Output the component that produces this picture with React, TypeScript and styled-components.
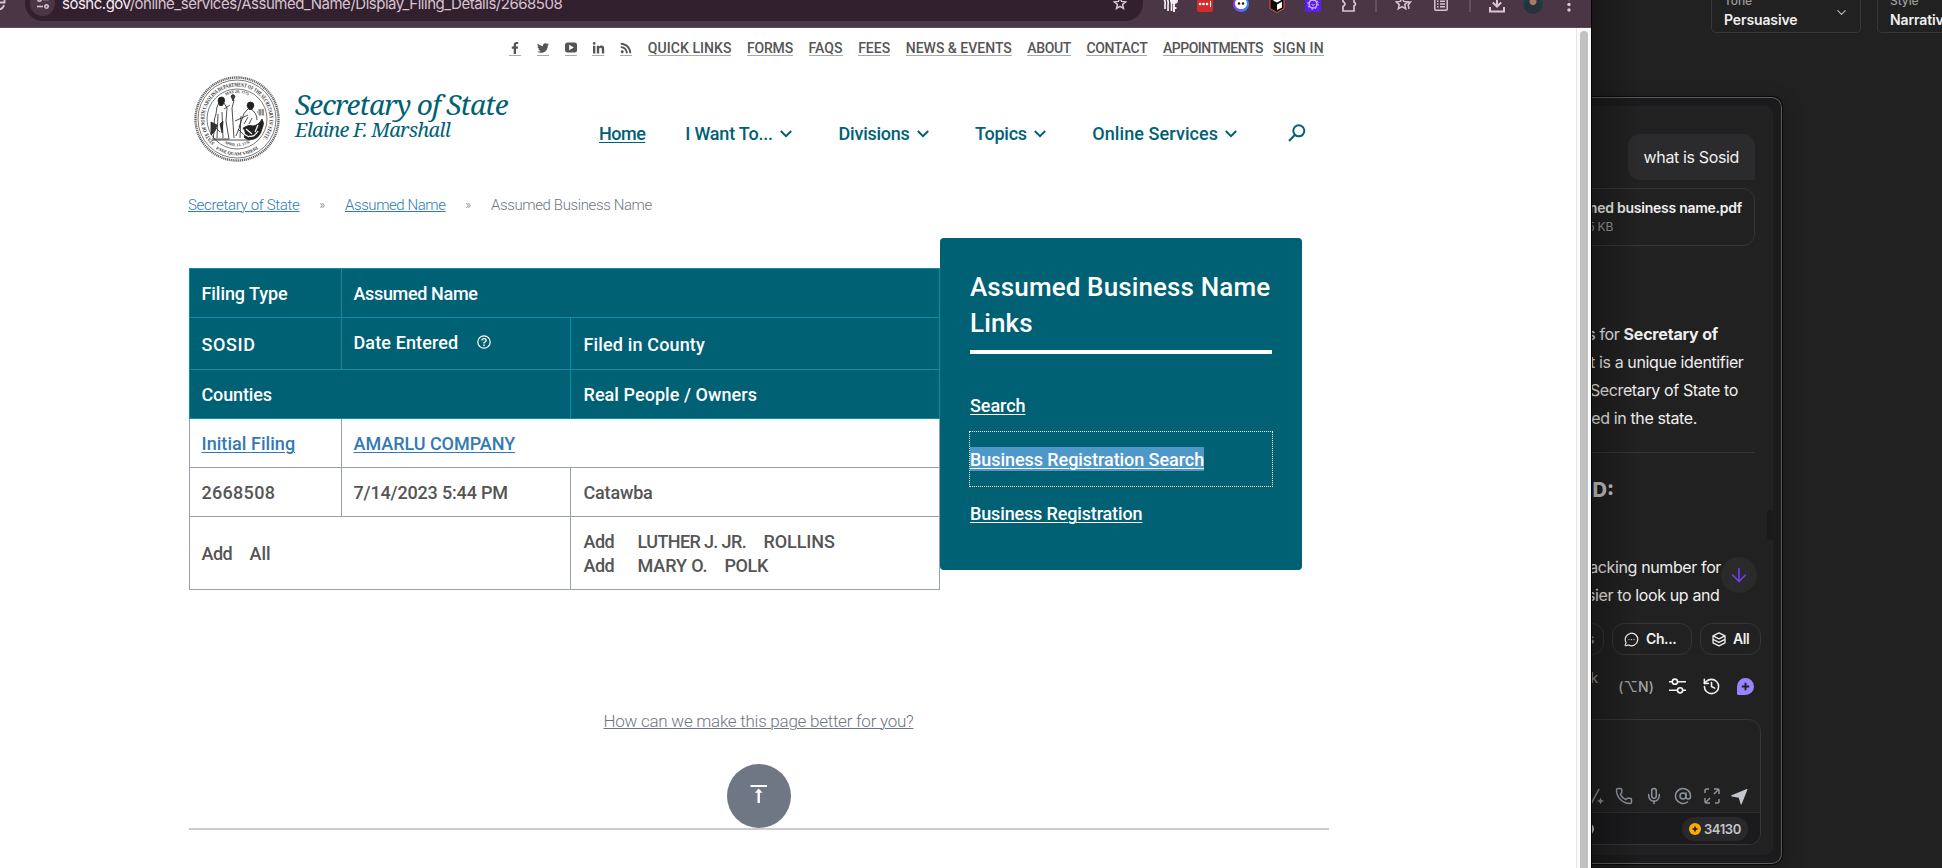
import React from 'react';
import styled, { createGlobalStyle, css } from 'styled-components';
import { Star, ChevronDown, History, Phone, Mic, AtSign, ArrowDown, MessageCircleMore } from 'lucide-react';
import { FaFacebookF, FaTwitter, FaLinkedinIn, FaRss } from 'react-icons/fa';

const TEAL = '#006074';
const RULE_TEAL = '#0a8fa5';
const SITE = 'Roboto, "Liberation Sans", sans-serif';
const APP = 'Inter, "Liberation Sans", sans-serif';

const GlobalStyle = createGlobalStyle`
  * { box-sizing: border-box; }
  body { margin: 0; background: #212121; }
  svg { display: block; flex: none; }
`;

const Desktop = styled.div`
  display: flex;
  width: 1942px;
  height: 868px;
  overflow: hidden;
  white-space: nowrap;
`;

/* ---------- Browser window ---------- */

const BrowserWindow = styled.div`
  display: flex;
  flex-direction: column;
  width: 1591px;
  flex: none;
  background: #fff;
`;

const Toolbar = styled.div`
  display: flex;
  height: 28px;
  flex: none;
  background: #4b3646;
  border-bottom: 1px solid #5d4a58;
  overflow: hidden;
  color: #dcc3d6;
`;

const ReloadSlot = styled.div`
  width: 25px;
  margin-top: -6px;
  flex: none;
`;

const AddressBar = styled.div`
  display: flex;
  align-items: center;
  width: 1118px;
  height: 36px;
  flex: none;
  margin-top: -15px;
  padding: 0 16px 0 5px;
  border-radius: 18px;
  background: #33202f;
`;

const SiteInfo = styled.div`
  display: grid;
  place-items: center;
  width: 25px;
  height: 26px;
  border-radius: 50%;
  background: #4b3646;
`;

const Address = styled.span`
  flex: 1;
  margin: 2px 0 0 7px;
  font: 400 15px/20px ${APP};
  letter-spacing: -0.49px;
  color: #d6c4d1;
  b { font-weight: 400; color: #f6edf4; }
`;

const Extensions = styled.div`
  display: flex;
  align-items: center;
  height: 36px;
  margin: -14px 0 0 8px;
`;

const Slot = styled.div<{ $w?: number }>`
  display: grid;
  place-items: center;
  width: ${p => p.$w ?? 36}px;
`;

const Divider = styled.i`
  width: 2px;
  height: 16px;
  background: #66505f;
`;

const Tile = styled.i<{ $bg: string; $round?: boolean }>`
  display: grid;
  place-items: center;
  width: 16px;
  height: 16px;
  border-radius: ${p => (p.$round ? '50%' : '2px')};
  background: ${p => p.$bg};
`;

const Avatar = styled.i`
  width: 20px;
  height: 20px;
  border-radius: 50%;
  background: radial-gradient(circle at 50% 38%, #a87b62 0 3px, transparent 4px),
    radial-gradient(ellipse at 50% 100%, #26333c 0 8px, #17445a 12px);
`;

const Viewport = styled.div`
  display: flex;
  flex: 1;
`;

const Page = styled.main`
  width: 1576px;
  padding-left: 189px;
  font-family: ${SITE};
  color: #555;
`;

const ScrollTrack = styled.div`
  width: 15px;
  padding: 3px 3px 0 3px;
  border-left: 1px solid #e6e6e6;
  background: #fafafa;
`;

const ScrollThumb = styled.div`
  height: 900px;
  width: 8px;
  border-radius: 4px;
  background: #c1c1c1;
`;

/* ---------- Site header ---------- */

const UtilityNav = styled.nav`
  display: flex;
  width: 1135px;
  height: 28px;
  padding-top: 12px;
  justify-content: flex-end;
  gap: 15.6px;
`;

const UtilityLink = styled.a<{ $w: number; $ls?: number; $tight?: boolean }>`
  width: ${p => p.$w}px;
  height: 16px;
  border-bottom: 1px solid #aaa;
  font: 500 14px/17px ${SITE};
  letter-spacing: ${p => p.$ls ?? 0}px;
  color: #555;
  ${p => p.$tight && css`margin-left: -5.6px;`}
  svg { margin: 2px auto 0; }
`;

const Header = styled.header`
  display: flex;
  height: 139px;
  padding-left: 5px;
`;

const SealSvg = styled.svg`
  width: 86px;
  height: 86px;
  margin-top: 20px;
`;

const Brand = styled.div`
  width: 319px;
  flex: none;
  padding: 33px 0 0 15px;
  font-family: "Noto Serif", "Liberation Serif", serif;
  font-style: italic;
  color: ${TEAL};
`;

const BrandTitle = styled.div`
  font-size: 28px;
  line-height: 30px;
  letter-spacing: -0.9px;
`;

const BrandName = styled.div`
  font-size: 20px;
  line-height: 22px;
  letter-spacing: -0.74px;
`;

const MainNav = styled.nav`
  display: flex;
  gap: 40.3px;
  padding-top: 66px;
`;

const NavItem = styled.a<{ $w: number; $ls: number; $current?: boolean }>`
  display: flex;
  align-items: center;
  height: 24px;
  font: 500 18px/24px ${SITE};
  color: ${TEAL};
  span {
    width: ${p => p.$w}px;
    letter-spacing: ${p => p.$ls}px;
    ${p => p.$current && css`text-decoration: underline; text-underline-offset: 2px; text-decoration-thickness: 1px;`}
  }
  svg { margin: 0 6px 0 7px; }
`;

const SearchButton = styled.span`
  margin: 2px 0 0 5px;
`;

const Breadcrumb = styled.nav`
  display: flex;
  height: 43px;
  margin-left: -1px;
  font: 300 15px/20px ${SITE};
  color: #6f7683;
  i { width: 45.5px; text-align: center; font-style: normal; font-size: 13px; }
`;

const Crumb = styled.span<{ $w: number; $ls: number; $link?: boolean }>`
  width: ${p => p.$w}px;
  letter-spacing: ${p => p.$ls}px;
  ${p => p.$link && css`
    color: #2f7bb3;
    text-decoration: underline;
    text-decoration-thickness: 1px;
    text-underline-offset: 1px;
  `}
`;

/* ---------- Filing table ---------- */

const Main = styled.section`
  display: flex;
  align-items: flex-start;
  height: 352px;
`;

const Filing = styled.div`
  width: 751px;
  margin-top: 30px;
`;

const Band = styled.div<{ $head?: boolean }>`
  --rule: ${p => (p.$head ? RULE_TEAL : '#97a1aa')};
  border-left: 1px solid var(--rule);
  ${p => p.$head && css`border-top: 1px solid ${RULE_TEAL};`}
  background: ${p => (p.$head ? TEAL : '#fff')};
  color: ${p => (p.$head ? '#fff' : '#555')};
`;

const Row = styled.div<{ $h?: number }>`
  display: flex;
  height: ${p => p.$h ?? 49}px;
  border-bottom: 1px solid var(--rule);
`;

const COLS = [152, 229, 369];

const Cell = styled.div<{ $from: number; $to: number }>`
  display: flex;
  flex-direction: column;
  justify-content: center;
  width: ${p => COLS.slice(p.$from, p.$to).reduce((a, b) => a + b, 0)}px;
  padding: 2px 0 0 ${p => (p.$from === 2 ? 12.5 : 11.5)}px;
  border-right: 1px solid var(--rule);
  font: 500 18px/24px ${SITE};
`;

const Label = styled.span<{ $ls?: number; $link?: boolean }>`
  display: block;
  letter-spacing: ${p => p.$ls ?? 0}px;
  ${p => p.$link && css`
    color: #337ab1;
    text-decoration: underline;
    text-decoration-thickness: 1px;
    text-underline-offset: 2px;
  `}
`;

const WithHelp = styled.div`
  display: flex;
  gap: 19px;
  height: 28px;
  svg { margin-top: 4px; }
`;

const Person = styled.div<{ $first: number; $given: number }>`
  display: grid;
  grid-template-columns: ${p => p.$first}px ${p => p.$given}px auto;
`;

/* ---------- Links card ---------- */

const LinksCard = styled.aside`
  width: 362px;
  height: 332px;
  padding: 31px 30px 0;
  border-radius: 4px;
  background: ${TEAL};
  color: #fff;
`;

const CardTitle = styled.h2`
  margin: 0 0 24px;
  padding-bottom: 9px;
  border-bottom: 4px solid #fff;
  font: 500 26px/36px ${SITE};
  letter-spacing: 0.12px;
`;

const CardLink = styled.a<{ $ls: number; $focus?: boolean }>`
  display: block;
  height: 54px;
  padding: 15px 0;
  font: 500 18px/24px ${SITE};
  letter-spacing: ${p => p.$ls}px;
  ${p => p.$focus && css`outline: 1px dotted #fff;`}
  span {
    display: inline-block;
    height: 24px;
    line-height: 26px;
    text-decoration: underline;
    text-decoration-thickness: 1px;
    text-underline-offset: 2px;
    background: ${p => (p.$focus ? '#4e97c9' : 'none')};
  }
`;

/* ---------- Footer ---------- */

const Footer = styled.footer`
  display: flex;
  flex-direction: column;
  align-items: center;
  width: 1140px;
  padding-top: 119px;
  border-bottom: 2px solid #cbcbcb;
`;

const Feedback = styled.a`
  height: 55px;
  margin-right: 1px;
  font: 300 17px/24px ${SITE};
  letter-spacing: -0.26px;
  color: #6f7683;
  text-decoration: underline;
  text-decoration-thickness: 1px;
  text-underline-offset: 1px;
`;

const ToTop = styled.div`
  width: 64px;
  height: 64px;
  padding: 20px 0 0 23px;
  border-radius: 50%;
  background: #6f7784;
`;

/* ---------- Dark application behind ---------- */

const Backdrop = styled.div`
  position: relative;
  display: flex;
  flex-direction: column;
  flex: 1;
  min-width: 0;
  overflow: hidden;
  border-left: 1px solid #050505;
  background: #212121;
  font-family: ${APP};
  color: #f0f0f0;
  &::after {
    content: '';
    position: absolute;
    inset: 0 auto 0 0;
    width: 48px;
    background: linear-gradient(90deg, rgba(0, 0, 0, 0.28), rgba(0, 0, 0, 0));
  }
`;

const Options = styled.div`
  display: flex;
  gap: 16px;
  height: 33px;
  flex: none;
  padding-left: 119px;
`;

const Option = styled.div`
  display: flex;
  justify-content: space-between;
  width: 150px;
  height: 33px;
  flex: none;
  padding: 0 11px 0 12px;
  border: 1px solid #373737;
  border-top: 0;
  border-radius: 0 0 5px 5px;
  svg { margin-top: 5px; color: #bbb; }
`;

const OptionText = styled.div`
  margin-top: -6px;
  font: 600 14px/18px ${APP};
  letter-spacing: -0.12px;
  small { display: block; margin-bottom: 3px; font: 500 12px/14px ${APP}; color: #999; }
`;

const Panel = styled.section`
  width: 190px;
  height: 767px;
  margin-top: 64px;
  padding: 8px 8px 8px 0;
  border: 1px solid #5c5c5c;
  border-left: 0;
  border-radius: 0 10px 10px 0;
  background: #1b1b1d;
  box-shadow: 0 0 0 1px #090909, 0 6px 22px rgba(0, 0, 0, 0.3);
`;

const Chat = styled.div`
  display: flex;
  flex-direction: column;
  align-items: flex-end;
  position: relative;
  height: 749px;
  padding: 28px 12px 0 0;
  overflow: hidden;
  border-radius: 0 8px 8px 0;
  background: #212121;
`;

const Bubble = styled.div`
  height: 46px;
  margin-right: 6px;
  padding: 0 16px;
  border-radius: 12px 12px 2px 12px;
  background: #2b2b2d;
  font: 400 16px/46px ${APP};
  letter-spacing: -0.36px;
`;

const FileCard = styled.div`
  width: 360px;
  height: 58px;
  flex: none;
  margin: 8px 6px 0 0;
  padding: 9px 12px 0 0;
  border: 1px solid #353535;
  border-radius: 12px;
  font: 600 14px/20px ${APP};
  letter-spacing: -0.25px;
  text-align: right;
  small { display: block; padding-right: 129px; font: 400 12px/18px ${APP}; color: #999; }
`;

const Copy = styled.div<{ $top: number }>`
  margin-top: ${p => p.$top}px;
  text-align: right;
  font: 400 16px/28px ${APP};
  letter-spacing: -0.38px;
  b { font-weight: 700; letter-spacing: -0.18px; }
`;

const Line = styled.div<{ $end: number }>`
  padding-right: ${p => p.$end}px;
`;

const Separator = styled.div`
  width: 360px;
  height: 1px;
  flex: none;
  margin: 20px 6px 0 0;
  background: #353535;
`;

const Heading = styled.div`
  margin: 22px 147px 0 0;
  font: 800 20px/30px ${APP};
  height: 28px;
  color: #ccc;
`;

const ChatScroll = styled.i`
  position: absolute;
  right: 0;
  top: 404px;
  width: 6px;
  height: 30px;
  border-radius: 3px;
  background: #1a1a1a;
`;

const JumpDown = styled.div`
  position: absolute;
  right: 16px;
  top: 451px;
  display: grid;
  place-items: center;
  width: 36px;
  height: 36px;
  border-radius: 50%;
  background: #2a2a2b;
  color: #6a40e6;
`;

const Chips = styled.div`
  display: flex;
  gap: 8px;
  margin-top: 14px;
`;

const Chip = styled.div<{ $w: number }>`
  display: flex;
  align-items: center;
  gap: 7px;
  width: ${p => p.$w}px;
  height: 32px;
  padding-left: 11px;
  border: 1px solid #353535;
  border-radius: 12px;
  font: 600 14px/20px ${APP};
  letter-spacing: -0.4px;
  &:first-child { justify-content: flex-end; padding-right: 9px; color: #999; }
`;

const Actions = styled.div`
  display: flex;
  align-items: center;
  gap: 16px;
  height: 32px;
  margin: 15px 7px 0 0;
  span { margin: 1px -1px 0 0; font: 500 14px/20px ${APP}; letter-spacing: 0.1px; color: #a4a4a6; }
  em { margin: -17px 4px 0 0; font: 400 14px/20px ${APP}; color: #999; }
`;

const Composer = styled.div`
  display: flex;
  flex-direction: column;
  justify-content: flex-end;
  width: 400px;
  height: 126px;
  flex: none;
  margin-top: 17px;
  overflow: hidden;
  border: 1px solid #37373a;
  border-radius: 12px;
`;

const Tools = styled.div`
  display: flex;
  align-items: center;
  justify-content: flex-end;
  gap: 11.5px;
  height: 32px;
  padding-right: 12px;
  color: #8d939d;
`;

const Meter = styled.div`
  display: flex;
  align-items: center;
  justify-content: flex-end;
  height: 32px;
  padding-right: 12px;
  border-top: 1px solid #2e2e30;
  background: #1b1b1e;
`;

const PillEnd = styled.i`
  width: 30px;
  height: 12px;
  margin-right: 88px;
  border-radius: 6px;
  background: #c8c8c8;
`;

const Credits = styled.div`
  display: flex;
  align-items: center;
  gap: 3px;
  height: 24px;
  padding: 0 7px;
  border-radius: 12px;
  background: #29292b;
  font: 600 13px/24px ${APP};
  letter-spacing: -0.35px;
  color: #c4c4c6;
`;

/* ---------- Drawings ---------- */

const Seal = () => (
  <SealSvg viewBox="0 0 86 86" fill="none" stroke="#222">
    <defs>
      <path id="outerRing" d="M20.8 66.7A32.500 32.500 0 1 1 65.200 66.7" />
      <path id="innerTop" d="M20 32A25 25 0 0 1 66 32" />
      <path id="innerLow" d="M23 61.500A27.500 27.500 0 0 0 63 61.500" />
      <path id="outerLow" d="M18 69.500A36.500 36.500 0 0 0 68 69.500" />
    </defs>
    <circle cx="43" cy="43" r="41.5" stroke="#666" strokeWidth="2.4" strokeDasharray="1.2 .7" />
    <circle cx="43" cy="43" r="39" strokeWidth=".6" />
    <circle cx="43" cy="43" r="30" strokeWidth=".6" />
    <g fill="#333" stroke="none" fontFamily="Liberation Serif, serif" fontWeight="700">
      <text fontSize="5.600"><textPath href="#outerRing" textLength="148" lengthAdjust="spacingAndGlyphs">STATE OF NORTH CAROLINA DEPARTMENT OF THE SECRETARY OF STATE</textPath></text>
      <text fontSize="3.900"><textPath href="#innerTop" startOffset="50%" textAnchor="middle">MAY 20, 1775</textPath></text>
      <text fontSize="3.900"><textPath href="#innerLow" startOffset="50%" textAnchor="middle">APRIL 12, 1776</textPath></text>
      <text fontSize="4.600"><textPath href="#outerLow" startOffset="50%" textAnchor="middle">ESSE QUAM VIDERI</textPath></text>
    </g>
    <g strokeWidth=".8">
      <path d="M25 26q-3 6-3 12-3 8-1 12l-2 13h16l-3-18 1-13-3-5M24 38l-1 24M28 36l1 26M18 48l8 8M30 33l6-4M40 24l-2 8 2 30M47 40l-1 22M18 64h38" />
      <path d="M17 46l6 3-2 6-4 4zM26 48l3-3-1 12z" fill="#333" />
      <path d="M24 25q0-4 3.500-4t3 4.500l-2 4h-3z" fill="#222" />
      <path d="M37 20q2-3 4 0l-2 5z" fill="#444" />
      <path d="M54 33q-5 4-6 10l-3 8M57 33q6 4 6 11M41 45l13-6M54 41l-4 7M58 42l-3 6M44 53l8 8M46 50l-4 10" />
      <path d="M53 30q0-4 3.500-4t3.500 4l-2 3.500h-3z" fill="#222" />
      <path d="M49 52q6-4 10-2 6-1 9-7 3 4 0 10-2 8-8 10-7 2-10-2 3-4-1-9z" fill="#222" />
      <path d="M52 53l6 5M55 60q5 2 9-5M64 49l-3 7M50 58l5 3" stroke="#fff" strokeWidth="1.200" />
      <path d="M64 34h6M63 36h7M64 38h6M66 33v7M69 33v7" stroke="#555" />
    </g>
  </SealSvg>
);

const Caret = () => (
  <svg width="12" height="8" viewBox="0 0 12 8" fill="none" stroke={TEAL} strokeWidth="2"><path d="M.8 1l5.2 5.2L11.2 1" /></svg>
);

const Sliders = () => (
  <svg width="17" height="16" viewBox="0 0 17 16" fill="none" stroke="#f2f2f2" strokeWidth="1.6">
    <path d="M0 3.7h3.2M8.6 3.7H17M0 12.3h8.4M13.8 12.3H17" /><circle cx="5.9" cy="3.7" r="2.6" /><circle cx="11.1" cy="12.3" r="2.6" />
  </svg>
);

const NewChat = () => (
  <svg width="17" height="17" viewBox="0 0 17 17"><path d="M8.5 0A8.5 8.5 0 1 1 8.5 17H1.5A1.5 1.5 0 0 1 0 15.5V8.5A8.5 8.5 0 0 1 8.5 0z" fill="#9b84fb" /><path d="M8.5 4.8v7.4M4.8 8.5h7.4" stroke="#212121" strokeWidth="1.9" /></svg>
);

const UTILITY: [string, number, number, boolean?][] = [
  ['QUICK LINKS', 83.5, 0.05], ['FORMS', 46, -0.17], ['FAQS', 34, 0.04], ['FEES', 32, 0],
  ['NEWS & EVENTS', 106, 0], ['ABOUT', 43.5, -0.38], ['CONTACT', 61, -0.3], ['APPOINTMENTS', 100, -0.49], ['SIGN IN', 51, 0.22, true],
];

const NAV: [string, number, number][] = [
  ['I Want To...', 88, -0.19], ['Divisions', 71, -0.24], ['Topics', 52, -0.22], ['Online Services', 126, 0.09],
];

export default function App() {
  return (
    <>
      <GlobalStyle />
      <Desktop>
        <BrowserWindow>
          <Toolbar>
            <ReloadSlot>
              <svg width="6" height="20" viewBox="0 0 6 20" fill="none" stroke="#dcc3d6" strokeWidth="1.8"><path d="M-1 15.5Q3 15 4 11M0 8.5h4.5V4" /></svg>
            </ReloadSlot>
            <AddressBar>
              <SiteInfo>
                <svg width="14" height="12" viewBox="0 0 14 12" fill="none" stroke="#dcc3d6" strokeWidth="1.6"><circle cx="3.5" cy="2.5" r="1.7" /><path d="M7 2.5h6M1 9.5h6" /><circle cx="10.5" cy="9.5" r="1.7" /></svg>
              </SiteInfo>
              <Address><b>sosnc.gov</b>/online_services/Assumed_Name/Display_Filing_Details/2668508</Address>
              <svg width="14" height="14" viewBox="0 0 14 14" fill="none" stroke="#dcc3d6" strokeWidth="1.5"><path d="M7 1.6l1.6 3.8 4.1.4-3.100 2.700.9 4L7 10.400l-3.500 2.100.9-4L1.300 5.800l4.100-.4z" /></svg>
            </AddressBar>
            <Extensions>
              <Slot>
                <svg width="17" height="16" viewBox="0 0 17 16" fill="none" stroke="#f4eef3" strokeWidth="1.7"><path d="M1 1q4 3 3 8v4M4 0q4 4 3 9v6M8 0q3 3 2.5 8v7" /><path d="M13 7v9M13 12h2.5" strokeWidth="2" /><circle cx="13" cy="4" r="3.2" fill="#f4eef3" /></svg>
              </Slot>
              <Slot><Tile $bg="#d42c2a"><svg width="14" height="6" viewBox="0 0 14 6" fill="#fff"><circle cx="2" cy="3" r="1.3" /><circle cx="5.5" cy="3" r="1.3" /><circle cx="9" cy="3" r="1.3" /><path d="M12 0h1v6h-1z" /></svg></Tile></Slot>
              <Slot><Tile $round $bg="linear-gradient(90deg,#8a3df0,#2b8cf4)"><svg width="14" height="12" viewBox="0 0 14 12"><ellipse cx="7" cy="5.5" rx="6" ry="5.5" fill="#fff" /><circle cx="5" cy="5.5" r="1.2" fill="#111" /><circle cx="9" cy="5.5" r="1.2" fill="#111" /></svg></Tile></Slot>
              <Slot><svg width="16" height="17" viewBox="0 0 16 17"><path d="M8 0l7 4v8.5l-7 4-7-4V4z" fill="#0a0a0a" stroke="#e2553f" /><path d="M8 8.5l5-2.7v5.7L8 14zM4 4.5l4-2 4 2-4 2z" fill="#fff" /></svg></Slot>
              <Slot><Tile $bg="#5f1bf7"><svg width="12" height="12" viewBox="0 0 12 12" fill="none" stroke="#d9c9ff"><circle cx="6" cy="6" r="4" strokeWidth="1.3" /><circle cx="6" cy="6" r="5.2" strokeDasharray="1.6 2.48" /><path d="M4.5 6.5q1.5 1.5 3 0" /></svg></Tile></Slot>
              <Slot><svg width="16" height="16" viewBox="0 0 16 16" fill="none" stroke="#dcc3d6" strokeWidth="1.7"><path d="M2 1h11v5q3 2 0 4v5H2v-4.500q4-2.500 0-5z" /></svg></Slot>
              <Slot $w={18}><Divider /></Slot>
              <Slot><svg width="17" height="16" viewBox="0 0 17 16" fill="none" stroke="#dcc3d6" strokeWidth="1.5"><path d="M7 1.5l1.7 3.9 4.2.4L9.700 8.600l1 4.200L7 10.600l-3.700 2.200 1-4.200L1.100 5.800l4.200-.4z" /><path d="M13 6.500l2.500-.5-2.300 3 .8 4" /></svg></Slot>
              <Slot $w={40}><svg width="14" height="14" viewBox="0 0 14 14" fill="none" stroke="#dcc3d6" strokeWidth="1.5"><rect x=".8" y=".8" width="12.4" height="12.4" rx="1" /><path d="M3 4.2h1.5M3 7h1.5M3 9.8h1.5M6 4.2h5M6 7h5M6 9.8h5" /></svg></Slot>
              <Slot $w={18}><Divider /></Slot>
              <Slot><svg width="16" height="17" viewBox="0 0 16 17" fill="none" stroke="#dcc3d6" strokeWidth="2"><path d="M8 0v10M3.8 6.5L8 10.500l4.200-4M1 11v4.500h14V11" /></svg></Slot>
              <Slot><Avatar /></Slot>
              <Slot><svg width="4" height="16" viewBox="0 0 4 16" fill="#dcc3d6"><circle cx="2" cy="2.5" r="1.7" /><circle cx="2" cy="8.5" r="1.7" /><circle cx="2" cy="14" r="1.7" /></svg></Slot>
            </Extensions>
          </Toolbar>

          <Viewport>
            <Page>
              <UtilityNav>
                <UtilityLink $w={12}><FaFacebookF size={12} /></UtilityLink>
                <UtilityLink $w={12}><FaTwitter size={12} /></UtilityLink>
                <UtilityLink $w={12}>
                  <svg width="12" height="11" viewBox="0 0 12 11"><rect y=".5" width="12" height="10" rx="2.5" fill="#555" /><path d="M4.2 2.700v5.600L8.800 5.500z" fill="#fff" /></svg>
                </UtilityLink>
                <UtilityLink $w={12}><FaLinkedinIn size={13} /></UtilityLink>
                <UtilityLink $w={12.5}><FaRss size={12} /></UtilityLink>
                {UTILITY.map(([label, w, ls, tight]) => (
                  <UtilityLink key={label} $w={w} $ls={ls} $tight={tight}>{label}</UtilityLink>
                ))}
              </UtilityNav>

              <Header>
                <Seal />
                <Brand>
                  <BrandTitle>Secretary of State</BrandTitle>
                  <BrandName>Elaine F. Marshall</BrandName>
                </Brand>
                <MainNav>
                  <NavItem $w={46} $ls={-0.5} $current><span>Home</span></NavItem>
                  {NAV.map(([label, w, ls]) => (
                    <NavItem key={label} $w={w} $ls={ls}><span>{label}</span><Caret /></NavItem>
                  ))}
                  <SearchButton>
                    <svg width="18" height="18" viewBox="0 0 18 18" fill="none" stroke={TEAL} strokeWidth="2"><circle cx="10.8" cy="6.8" r="5.5" /><path d="M6.8 11L1 17" /></svg>
                  </SearchButton>
                </MainNav>
              </Header>

              <Breadcrumb>
                <Crumb $w={111.5} $ls={-0.32} $link>Secretary of State</Crumb><i>»</i>
                <Crumb $w={100.5} $ls={-0.42} $link>Assumed Name</Crumb><i>»</i>
                <Crumb $w={161} $ls={-0.38}>Assumed Business Name</Crumb>
              </Breadcrumb>

              <Main>
                <Filing>
                  <Band $head>
                    <Row>
                      <Cell $from={0} $to={1}><Label $ls={-0.07}>Filing Type</Label></Cell>
                      <Cell $from={1} $to={3}><Label $ls={-0.35}>Assumed Name</Label></Cell>
                    </Row>
                    <Row $h={52}>
                      <Cell $from={0} $to={1}><Label $ls={0.59}>SOSID</Label></Cell>
                      <Cell $from={1} $to={2}>
                        <WithHelp>
                          <Label $ls={0.12}>Date Entered</Label>
                          <svg width="14" height="14" viewBox="0 0 14 14" fill="none" stroke="#fff" strokeWidth="1.2"><circle cx="7" cy="7" r="6.2" /><path d="M4.9 5.5Q5 3.600 7 3.600T9.100 5.400Q9.100 6.500 7 7.700v.8" strokeWidth="1.4" /><path d="M7 9.600V11" strokeWidth="1.5" /></svg>
                        </WithHelp>
                      </Cell>
                      <Cell $from={2} $to={3}><Label $ls={0.15}>Filed in County</Label></Cell>
                    </Row>
                    <Row>
                      <Cell $from={0} $to={2}><Label $ls={-0.15}>Counties</Label></Cell>
                      <Cell $from={2} $to={3}><Label $ls={0.06}>Real People / Owners</Label></Cell>
                    </Row>
                  </Band>
                  <Band>
                    <Row>
                      <Cell $from={0} $to={1}><Label $ls={0.05} $link as="a">Initial Filing</Label></Cell>
                      <Cell $from={1} $to={3}><Label $ls={-0.04} $link as="a">AMARLU COMPANY</Label></Cell>
                    </Row>
                    <Row>
                      <Cell $from={0} $to={1}><Label $ls={0.3}>2668508</Label></Cell>
                      <Cell $from={1} $to={2}><Label $ls={-0.17}>7/14/2023 5:44 PM</Label></Cell>
                      <Cell $from={2} $to={3}><Label $ls={-0.17}>Catawba</Label></Cell>
                    </Row>
                    <Row $h={73}>
                      <Cell $from={0} $to={2}>
                        <Person $first={48} $given={60}><Label $ls={-0.5}>Add</Label><Label>All</Label></Person>
                      </Cell>
                      <Cell $from={2} $to={3}>
                        <Person $first={54} $given={126}><Label $ls={-0.5}>Add</Label><Label $ls={-0.62}>LUTHER J. JR.</Label><Label $ls={-0.1}>ROLLINS</Label></Person>
                        <Person $first={54} $given={87}><Label $ls={-0.5}>Add</Label><Label $ls={-0.09}>MARY O.</Label><Label $ls={-0.4}>POLK</Label></Person>
                      </Cell>
                    </Row>
                  </Band>
                </Filing>

                <LinksCard>
                  <CardTitle>Assumed Business Name<br />Links</CardTitle>
                  <CardLink $ls={-0.06}><span>Search</span></CardLink>
                  <CardLink $ls={-0.06} $focus><span>Business Registration Search</span></CardLink>
                  <CardLink $ls={-0.15}><span>Business Registration</span></CardLink>
                </LinksCard>
              </Main>

              <Footer>
                <Feedback>How can we make this page better for you?</Feedback>
                <ToTop>
                  <svg width="18" height="20" viewBox="0 0 18 20" fill="none" stroke="#fff"><path d="M.5 2h16.5" strokeWidth="2" /><path d="M8.7 6v13" strokeWidth="2.4" /><path d="M8.7 4.5l3.8 4.200H4.900z" fill="#fff" stroke="none" /></svg>
                </ToTop>
              </Footer>
            </Page>
            <ScrollTrack><ScrollThumb /></ScrollTrack>
          </Viewport>
        </BrowserWindow>

        <Backdrop>
          <Options>
            <Option><OptionText><small>Tone</small>Persuasive</OptionText><ChevronDown size={15} strokeWidth={1.8} /></Option>
            <Option><OptionText><small>Style</small>Narrative</OptionText></Option>
          </Options>
          <Panel>
            <Chat>
              <Bubble>what is Sosid</Bubble>
              <FileCard>assumed business name.pdf<small>5 KB</small></FileCard>
              <Copy $top={74}>
                <Line $end={43}>s for <b>Secretary of</b></Line>
                <Line $end={17.5}>t is a unique identifier</Line>
                <Line $end={23}>Secretary of State to</Line>
                <Line $end={64}>ed in the state.</Line>
              </Copy>
              <Separator />
              <Heading>D:</Heading>
              <Copy $top={50}>
                <Line $end={40}>acking number for</Line>
                <Line $end={41.5}>sier to look up and</Line>
              </Copy>
              <Chips>
                <Chip $w={60}>s</Chip>
                <Chip $w={80}><MessageCircleMore size={15} strokeWidth={2} />Ch...</Chip>
                <Chip $w={61}>
                  <svg width="14" height="15" viewBox="0 0 14 15" fill="none" stroke="#eee" strokeWidth="1.3" strokeLinejoin="round"><path d="M7 .8l6 3-6 3-6-3zM1 4v3.400l6 3 6-3V4M1 7.400v3.400l6 3 6-3V7.400" /></svg>
                  All
                </Chip>
              </Chips>
              <Actions>
                <em>k</em><span>(⌥N)</span>
                <Sliders />
                <History size={19} strokeWidth={2} />
                <NewChat />
              </Actions>
              <Composer>
                <Tools>
                  <svg width="15" height="17" viewBox="0 0 15 17" fill="none" stroke="#8d939d" strokeWidth="1.5"><path d="M10 1L2 16" /><path d="M11.5 9.500l1 2.500 2.500 1-2.500 1-1 2.500-1-2.500-2.500-1 2.500-1z" fill="#8d939d" stroke="none" /></svg>
                  <Phone size={18} strokeWidth={2} />
                  <Mic size={18} strokeWidth={2} />
                  <AtSign size={18} strokeWidth={2} />
                  <svg width="16" height="16" viewBox="0 0 16 16" fill="none" stroke="#8d939d" strokeWidth="1.5"><path d="M1 5V2.500Q1 1 2.500 1H5M10 1h3.500Q15 1 15 2.500V6M15 11v2.500q0 1.500-1.500 1.500H11M6 15H2.500Q1 15 1 13.500V10M14.500 1.500L10 6M1.500 14.500L6 10" /></svg>
                  <svg width="17" height="17" viewBox="0 0 17 17"><path d="M.6 7.200L15.800 1q.9-.2.600.7L10.700 16q-.6 1-1.100 0L7.800 9.800.7 8.400q-1-.6-.1-1.200z" fill="#c2c5ca" /></svg>
                </Tools>
                <Meter>
                  <PillEnd />
                  <Credits>
                    <svg width="12" height="12" viewBox="0 0 12 12"><circle cx="6" cy="6" r="6" fill="#fdab07" /><path d="M6 2.500L7.100 4.900 9.500 6 7.100 7.100 6 9.500 4.900 7.100 2.500 6 4.900 4.900z" fill="#29292b" /></svg>
                    34130
                  </Credits>
                </Meter>
              </Composer>
              <ChatScroll />
              <JumpDown><ArrowDown size={22} strokeWidth={1.9} /></JumpDown>
            </Chat>
          </Panel>
        </Backdrop>
      </Desktop>
    </>
  );
}
